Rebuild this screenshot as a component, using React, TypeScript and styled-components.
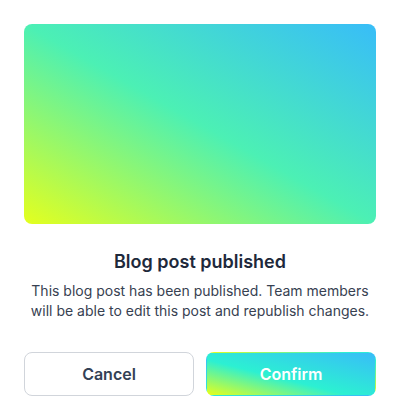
import React from "react";
import styled, { createGlobalStyle } from "styled-components";

const Global = createGlobalStyle`
  html, body { margin: 0; padding: 0; background: #ffffff; }
  body { font-family: Inter, "Noto Sans", sans-serif; -webkit-font-smoothing: antialiased; }
`;

const Card = styled.div`
  width: 400px;
  box-sizing: border-box;
  padding: 24px;
  display: flex;
  flex-direction: column;
`;

const Hero = styled.div`
  height: 200px;
  border-radius: 8px;
  background: linear-gradient(to top right, #e4ff1e 0%, #4cf0b4 50%, #38bdf8 100%);
`;

const Body = styled.div`
  margin-top: 24px;
  display: flex;
  flex-direction: column;
  align-items: center;
  text-align: center;
  gap: 5px;
`;

const Title = styled.h2`
  margin: 0;
  font-size: 18px;
  line-height: 28px;
  font-weight: 600;
  color: #1e293b;
`;

const Text = styled.p`
  margin: 0;
  font-size: 14px;
  line-height: 20px;
  color: #374151;
`;

const Actions = styled.div`
  margin-top: 31px;
  display: grid;
  grid-template-columns: 1fr 1fr;
  gap: 12px;
`;

const Button = styled.button<{ $primary?: boolean }>`
  height: 44px;
  border-radius: 8px;
  font-family: Inter, "Noto Sans", sans-serif;
  font-size: 16px;
  font-weight: 600;
  cursor: pointer;
  border: 1px solid ${(p) => (p.$primary ? "transparent" : "#d1d5db")};
  background: ${(p) =>
    p.$primary
      ? "linear-gradient(to top right, #e6ff1a 0%, #2cf0d2 42%, #38bdf8 100%)"
      : "#ffffff"};
  color: ${(p) => (p.$primary ? "#ffffff" : "#334155")};
`;

export default function App() {
  return (
    <>
      <Global />
      <Card>
        <Hero />
        <Body>
          <Title>Blog post published</Title>
          <Text>
            This blog post has been published. Team members will be able to edit this post and
            republish changes.
          </Text>
        </Body>
        <Actions>
          <Button>Cancel</Button>
          <Button $primary>Confirm</Button>
        </Actions>
      </Card>
    </>
  );
}
